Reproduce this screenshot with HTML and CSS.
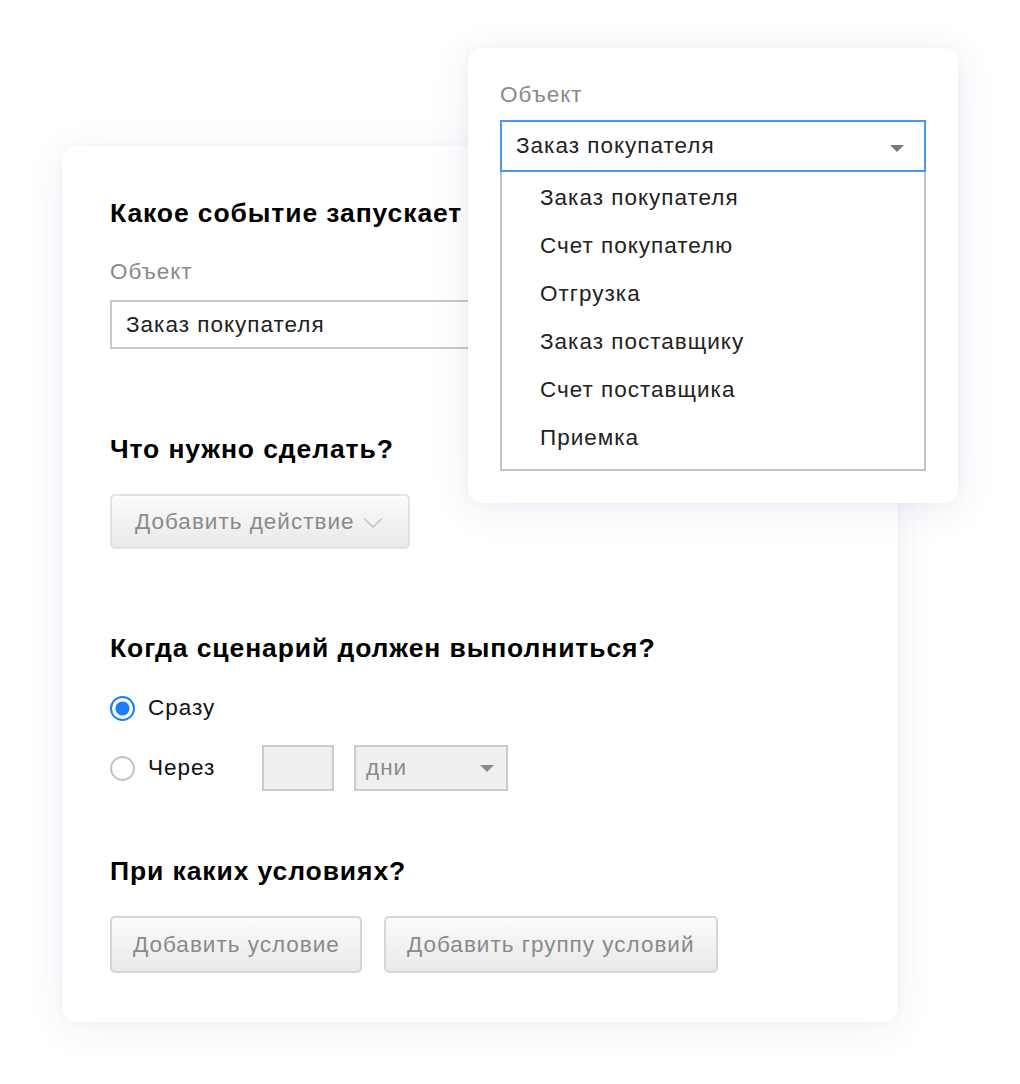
FILE: index.html
```html
<!DOCTYPE html>
<html lang="ru">
<head>
<meta charset="utf-8">
<link rel="stylesheet" href="styles.css">
</head>
<body>
<div class="stage">
  <div class="card">
    <h2 class="h h1">Какое событие запускает сценарий?</h2>
    <div class="label">Объект</div>
    <div class="input main-input">Заказ покупателя</div>

    <h2 class="h h2">Что нужно сделать?</h2>
    <div class="btn btn-action">Добавить действие
      <svg class="chev" width="20" height="12" viewBox="0 0 20 12"><path d="M1 1.5 L10 10 L19 1.5" fill="none" stroke="#c4c4c4" stroke-width="1.5"/></svg>
    </div>

    <h2 class="h h3">Когда сценарий должен выполниться?</h2>
    <div class="radio-row r1">
      <span class="radio checked"></span><span class="rlabel">Сразу</span>
    </div>
    <div class="radio-row r2">
      <span class="radio"></span><span class="rlabel">Через</span>
      <span class="num-box"></span>
      <span class="days">дни<span class="tri small"></span></span>
    </div>

    <h2 class="h h4">При каких условиях?</h2>
    <div class="btn-row">
      <div class="btn btn-cond">Добавить условие</div>
      <div class="btn btn-group">Добавить группу условий</div>
    </div>
  </div>

  <div class="popup">
    <div class="label">Объект</div>
    <div class="select">Заказ покупателя<span class="tri"></span></div>
    <ul class="list">
      <li>Заказ покупателя</li>
      <li>Счет покупателю</li>
      <li>Отгрузка</li>
      <li>Заказ поставщику</li>
      <li>Счет поставщика</li>
      <li>Приемка</li>
    </ul>
  </div>
</div>
</body>
</html>
```
FILE: styles.css
```css
* { box-sizing: border-box; }
html, body { margin: 0; padding: 0; background: #fff; }
body {
  font-family: "Liberation Sans", Arial, sans-serif;
  color: #222;
  width: 1020px;
  height: 1084px;
  overflow: hidden;
  letter-spacing: 1px;
}
.stage {
  position: relative;
  width: 1020px;
  height: 1084px;
  padding: 146px 0 0 62px;
}
.card {
  width: 836px;
  height: 876px;
  background: #fff;
  border-radius: 14px;
  box-shadow: 0 6px 40px rgba(40, 60, 130, 0.07), 0 0 10px rgba(40, 60, 130, 0.03);
  padding: 53px 48px 49px 48px;
  display: flex;
  flex-direction: column;
  align-items: flex-start;
  overflow: hidden;
}
.h {
  margin: 0;
  font-size: 26.5px;
  line-height: 28px;
  font-weight: bold;
  letter-spacing: 0.9px;
  color: #000;
  white-space: nowrap;
}
.label {
  font-size: 22.5px;
  line-height: 24px;
  color: #8a8a8a;
}
.card .label { margin-top: 33px; }
.input {
  margin-top: 16px;
  height: 49px;
  width: 600px;
  border: 2px solid #c9c9c9;
  font-size: 22.5px;
  line-height: 45px;
  padding-left: 14px;
  color: #222;
}
.h2 { margin-top: 86px; }
.btn {
  height: 56px;
  border: 2px solid #d6d6d6;
  border-radius: 5px;
  background: linear-gradient(#fbfbfb, #e9e9e9);
  color: #8a8a8a;
  font-size: 22.5px;
  display: flex;
  align-items: center;
  padding: 0 20px;
  white-space: nowrap;
}
.btn-action {
  margin-top: 31px;
  width: 300px;
  height: 55px;
  padding-left: 23px;
  border-color: #e2e2e2;
}
.chev { margin-left: 8px; margin-top: 2px; }
.h3 { margin-top: 85px; }
.radio-row {
  display: flex;
  align-items: center;
  font-size: 22.5px;
  color: #111;
}
.r1 { margin-top: 34px; height: 24px; }
.r2 { margin-top: 25px; height: 46px; }
.radio {
  width: 25px;
  height: 25px;
  border-radius: 50%;
  border: 2px solid #c4c4c4;
  background: #fff;
  flex: none;
}
.radio.checked {
  border: 2px solid #1a7ef7;
  background: radial-gradient(circle, #1a7ef7 0 6.5px, #fff 7.5px);
}
.rlabel { margin-left: 13px; }
.r2 .rlabel { width: 114px; }
.num-box {
  width: 72px;
  height: 46px;
  background: #efefef;
  border: 2px solid #cbcbcb;
}
.days {
  position: relative;
  margin-left: 20px;
  width: 154px;
  height: 46px;
  background: #efefef;
  border: 2px solid #cbcbcb;
  color: #8a8a8a;
  font-size: 22.5px;
  line-height: 42px;
  padding-left: 10px;
}
.tri {
  position: absolute;
  right: 20px;
  top: 23px;
  width: 0;
  height: 0;
  border-left: 7px solid transparent;
  border-right: 7px solid transparent;
  border-top: 7px solid #7a7a7a;
}
.tri.small {
  right: 12px;
  top: 18px;
  border-top-color: #8a8a8a;
}
.h4 { margin-top: 66px; }
.btn-row {
  margin-top: 31px;
  display: flex;
  gap: 22px;
}
.btn-cond { width: 252px; height: 57px; padding-left: 21px; }
.btn-group { width: 334px; height: 57px; padding-left: 21px; }

.popup {
  position: absolute;
  left: 468px;
  top: 48px;
  width: 490px;
  height: 455px;
  background: #fff;
  border-radius: 14px;
  box-shadow: 0 6px 40px rgba(40, 60, 130, 0.09), 0 0 12px rgba(40, 60, 130, 0.04);
  padding: 35px 32px 32px 32px;
}
.select {
  position: relative;
  margin-top: 13px;
  height: 52px;
  border: 2px solid #4b97ee;
  font-size: 22.5px;
  line-height: 48px;
  padding-left: 14px;
  color: #222;
}
.list {
  list-style: none;
  margin: 0;
  padding: 2px 0 8px 0;
  border: 2px solid #c2c2c2;
  border-top: none;
  height: 299px;
}
.list li {
  height: 48px;
  line-height: 48px;
  padding-left: 38px;
  font-size: 22.5px;
  color: #222;
}
```
